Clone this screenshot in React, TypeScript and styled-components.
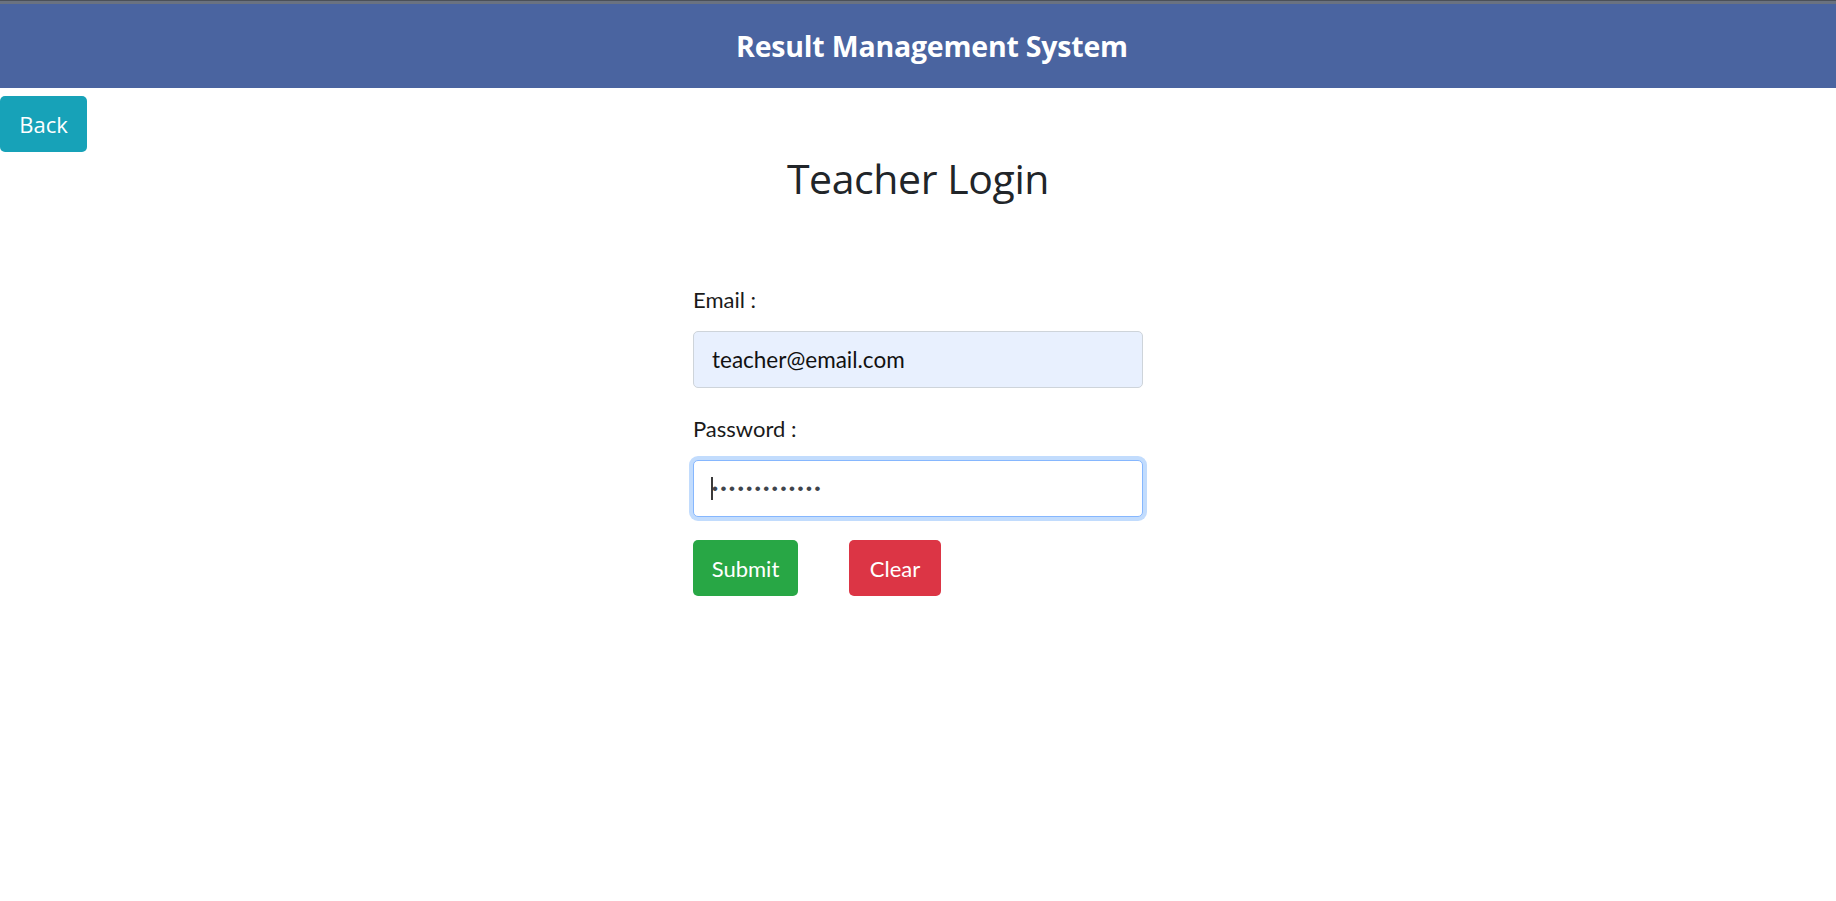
import React from "react";
import styled, { createGlobalStyle } from "styled-components";

const GlobalStyle = createGlobalStyle`
  html, body { margin: 0; padding: 0; background: #ffffff; }
  body { font-family: "Open Sans", "Noto Sans", sans-serif; color: #212529; }
  * { box-sizing: border-box; }
`;

const TopStripe = styled.div`
  height: 4px;
  background: linear-gradient(#4b5058 0 1px, #6a7280 1px 4px);
`;

const Header = styled.header`
  height: 84px;
  background: #4a64a0;
  display: flex;
  align-items: center;
  justify-content: center;
  padding-left: 28px;
`;

const HeaderTitle = styled.h3`
  margin: 0;
  color: #ffffff;
  font-family: "Open Sans", sans-serif;
  font-weight: 700;
  font-size: 28.5px;
  letter-spacing: -0.2px;
`;

const BackRow = styled.div`
  padding-top: 8px;
`;

const Btn = styled.button<{ $bg: string; $font?: string; $w: number }>`
  height: 56px;
  width: ${(p) => p.$w}px;
  border: none;
  border-radius: 5px;
  background: ${(p) => p.$bg};
  color: #ffffff;
  font-family: ${(p) => p.$font ?? `"Lato", sans-serif`};
  font-size: 22px;
  display: inline-flex;
  align-items: center;
  justify-content: center;
  padding: 0;
  cursor: pointer;
`;

const Title = styled.h1`
  margin: 0;
  text-align: center;
  font-family: "Open Sans", sans-serif;
  font-weight: 500;
  font-size: 41px;
  line-height: 52px;
  letter-spacing: -0.4px;
  color: #212529;
`;

const Form = styled.form`
  width: 450px;
  margin: 0 auto;
  padding-top: 84px;
  display: flex;
  flex-direction: column;
  font-family: "Lato", sans-serif;
`;

const Label = styled.label<{ $top: number }>`
  display: block;
  font-size: 22px;
  line-height: 24px;
  color: #1a1a1a;
  margin-top: ${(p) => p.$top}px;
  margin-bottom: 19px;
`;

const InputWrap = styled.div`
  position: relative;
`;

const Input = styled.input<{ $focused?: boolean; $autofill?: boolean }>`
  display: block;
  width: 100%;
  height: 57px;
  padding: 0 18px;
  font-family: "Lato", sans-serif;
  font-size: 22.5px;
  color: #111111;
  border-radius: 5px;
  outline: none;
  border: 1px solid ${(p) => (p.$focused ? "#86b7fe" : "#ced4da")};
  background: ${(p) => (p.$autofill ? "#e8f0fe" : "#ffffff")};
  box-shadow: ${(p) => (p.$focused ? "0 0 0 4px #c2dcfd" : "none")};
`;

const PasswordInput = styled(Input)`
  font-family: "Liberation Sans", sans-serif;
  font-size: 17px;
  letter-spacing: 2.6px;
  color: #3f454c;
`;

const Caret = styled.span`
  position: absolute;
  left: 18px;
  top: 17px;
  width: 2px;
  height: 23px;
  background: #3a3a3a;
`;

const ButtonRow = styled.div`
  display: flex;
  gap: 51px;
  margin-top: 23px;
`;

export default function App() {
  return (
    <>
      <GlobalStyle />
      <TopStripe />
      <Header>
        <HeaderTitle>Result Management System</HeaderTitle>
      </Header>
      <BackRow>
        <Btn type="button" $bg="#17a2b8" $w={87} $font={`"Open Sans", sans-serif`}>
          Back
        </Btn>
      </BackRow>
      <Title>Teacher Login</Title>
      <Form onSubmit={(e) => e.preventDefault()}>
        <Label $top={0} htmlFor="email">Email :</Label>
        <Input id="email" type="email" $autofill defaultValue="teacher@email.com" />
        <Label $top={29} htmlFor="password">Password :</Label>
        <InputWrap>
          <PasswordInput id="password" type="password" $focused defaultValue="teacher123456" />
          <Caret />
        </InputWrap>
        <ButtonRow>
          <Btn type="submit" $bg="#28a745" $w={105}>Submit</Btn>
          <Btn type="button" $bg="#dc3545" $w={92}>Clear</Btn>
        </ButtonRow>
      </Form>
    </>
  );
}
